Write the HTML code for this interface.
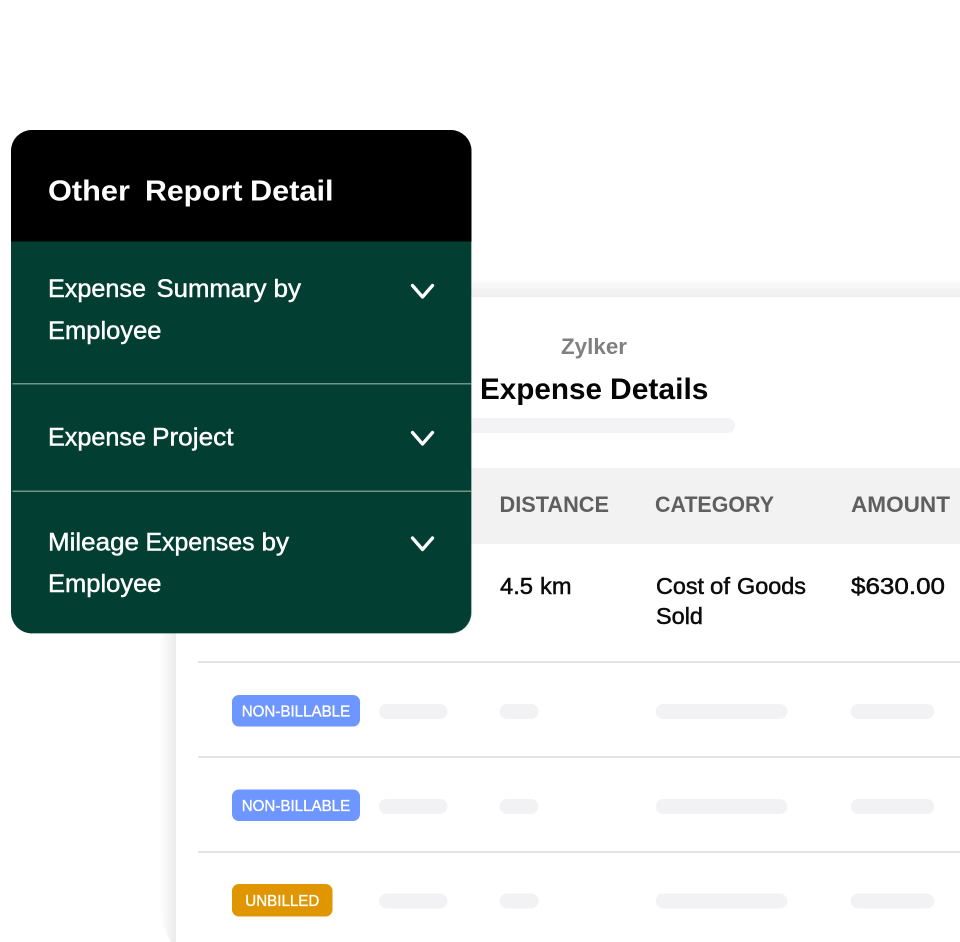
<!DOCTYPE html>
<html>
<head>
<meta charset="utf-8">
<style>
html,body{margin:0;padding:0;background:#fff;width:960px;height:942px;overflow:hidden}
svg{display:block}
text{font-family:"Liberation Sans",Arial,sans-serif}
.b{font-weight:700}
.w{fill:#fff;stroke:#fff;stroke-width:.45;font-size:25px}
.k{fill:#0b0b0b;stroke:#0b0b0b;stroke-width:.5;font-size:23.5px}
.h{fill:#5f5f5f;font-size:22.5px;font-weight:700}
.t{fill:#fff;font-size:16px;stroke:#fff;stroke-width:.35}
</style>
</head>
<body>
<svg width="960" height="942" viewBox="0 0 960 942" xmlns="http://www.w3.org/2000/svg">
<defs>
<linearGradient id="gl" x1="0" x2="1" y1="0" y2="0"><stop offset="0" stop-color="#fff"/><stop offset="1" stop-color="#ebebeb"/></linearGradient>
<linearGradient id="gt" x1="0" x2="0" y1="0" y2="1"><stop offset="0" stop-color="#fff"/><stop offset=".2" stop-color="#fafafa"/><stop offset="1" stop-color="#eeeeee"/></linearGradient>
</defs>
<rect x="176" y="279" width="784" height="18" fill="url(#gt)"/>
<path d="M160 600H176V942H171Q160 925 160 900Z" fill="url(#gl)"/>
<rect x="176" y="297" width="784" height="645" fill="#fff"/>

<text x="561" y="354" class="b" font-size="22.5" fill="#808080" textLength="66" lengthAdjust="spacingAndGlyphs">Zylker</text>
<g class="b" font-size="30" fill="#050505">
<text x="480" y="399" textLength="122" lengthAdjust="spacingAndGlyphs">Expense</text>
<text x="610" y="399" textLength="98.5" lengthAdjust="spacingAndGlyphs">Details</text>
</g>
<rect x="440" y="418" width="295" height="15" rx="7.5" fill="#f3f3f5"/>

<rect x="176" y="468" width="784" height="76" fill="#f2f2f2"/>
<text x="499.5" y="512" class="h" textLength="109.5" lengthAdjust="spacingAndGlyphs">DISTANCE</text>
<text x="655" y="512" class="h" textLength="119" lengthAdjust="spacingAndGlyphs">CATEGORY</text>
<text x="851" y="512" class="h" textLength="99" lengthAdjust="spacingAndGlyphs">AMOUNT</text>

<text x="500" y="594" class="k" textLength="33" lengthAdjust="spacingAndGlyphs">4.5</text>
<text x="540" y="594" class="k" textLength="31.5" lengthAdjust="spacingAndGlyphs">km</text>
<text x="656" y="594" class="k" textLength="48" lengthAdjust="spacingAndGlyphs">Cost</text>
<text x="710" y="594" class="k" textLength="20" lengthAdjust="spacingAndGlyphs">of</text>
<text x="737" y="594" class="k" textLength="69" lengthAdjust="spacingAndGlyphs">Goods</text>
<text x="656" y="624" class="k" textLength="47" lengthAdjust="spacingAndGlyphs">Sold</text>
<text x="851" y="594" class="k" textLength="94" lengthAdjust="spacingAndGlyphs">$630.00</text>

<rect x="198" y="661" width="762" height="2" fill="#e4e4e4"/>
<rect x="198" y="756" width="762" height="2" fill="#e4e4e4"/>
<rect x="198" y="851" width="762" height="2" fill="#e4e4e4"/>

<rect x="232" y="695" width="128" height="31.5" rx="7" fill="#6e96ff"/>
<text x="241.7" y="716.6" class="t" textLength="108.5" lengthAdjust="spacingAndGlyphs">NON-BILLABLE</text>
<rect x="232" y="789.5" width="128" height="31.5" rx="7" fill="#6e96ff"/>
<text x="241.7" y="811.2" class="t" textLength="108.5" lengthAdjust="spacingAndGlyphs">NON-BILLABLE</text>
<rect x="232" y="884" width="100.5" height="32.5" rx="7" fill="#e09600"/>
<text x="245.3" y="906" class="t" textLength="74" lengthAdjust="spacingAndGlyphs">UNBILLED</text>

<g fill="#f2f2f4">
<rect x="379" y="704" width="68.5" height="15" rx="7.5"/><rect x="499.5" y="704" width="39" height="15" rx="7.5"/><rect x="655.7" y="704" width="131.7" height="15" rx="7.5"/><rect x="850.7" y="704" width="83.5" height="15" rx="7.5"/>
<rect x="379" y="799" width="68.5" height="15" rx="7.5"/><rect x="499.5" y="799" width="39" height="15" rx="7.5"/><rect x="655.7" y="799" width="131.7" height="15" rx="7.5"/><rect x="850.7" y="799" width="83.5" height="15" rx="7.5"/>
<rect x="379" y="893.5" width="68.5" height="15" rx="7.5"/><rect x="499.5" y="893.5" width="39" height="15" rx="7.5"/><rect x="655.7" y="893.5" width="131.7" height="15" rx="7.5"/><rect x="850.7" y="893.5" width="83.5" height="15" rx="7.5"/>
</g>

<rect x="11" y="130" width="460.5" height="503.5" rx="21" fill="#023f32"/>
<path d="M11 241.5V151A21 21 0 0 1 32 130H450.5A21 21 0 0 1 471.5 151V241.5Z" fill="#000"/>
<path d="M471.3 242V612.5A21 21 0 0 1 450 633.3H32" fill="none" stroke="#5f8a7d" stroke-width=".5"/>
<rect x="12.5" y="383" width="459" height="1.5" fill="#6f9488"/>
<rect x="12.5" y="490.5" width="459" height="1.5" fill="#6f9488"/>

<g class="b" font-size="29" fill="#fff">
<text x="48" y="200.7" textLength="82" lengthAdjust="spacingAndGlyphs">Other</text>
<text x="145" y="200.7" textLength="97.5" lengthAdjust="spacingAndGlyphs">Report</text>
<text x="250" y="200.7" textLength="83.5" lengthAdjust="spacingAndGlyphs">Detail</text>
</g>
<text x="48" y="297" class="w" textLength="98" lengthAdjust="spacingAndGlyphs">Expense</text>
<text x="156.5" y="297" class="w" textLength="110" lengthAdjust="spacingAndGlyphs">Summary</text>
<text x="273.5" y="297" class="w" textLength="27.5" lengthAdjust="spacingAndGlyphs">by</text>
<text x="48" y="339" class="w" textLength="113.5" lengthAdjust="spacingAndGlyphs">Employee</text>
<text x="48" y="445.5" class="w" textLength="98" lengthAdjust="spacingAndGlyphs">Expense</text>
<text x="152" y="445.5" class="w" textLength="81.5" lengthAdjust="spacingAndGlyphs">Project</text>
<text x="48" y="550.5" class="w" textLength="91" lengthAdjust="spacingAndGlyphs">Mileage</text>
<text x="145.5" y="550.5" class="w" textLength="109" lengthAdjust="spacingAndGlyphs">Expenses</text>
<text x="261.5" y="550.5" class="w" textLength="27.5" lengthAdjust="spacingAndGlyphs">by</text>
<text x="48" y="592" class="w" textLength="113.5" lengthAdjust="spacingAndGlyphs">Employee</text>

<g fill="none" stroke="#fff" stroke-width="3.3" stroke-linecap="round" stroke-linejoin="round">
<path d="M412.5 285.5L422.5 297L432.5 285.5"/>
<path d="M412.5 432.5L422.5 444L432.5 432.5"/>
<path d="M412.5 538L422.5 549.5L432.5 538"/>
</g>
</svg>
</body>
</html>
